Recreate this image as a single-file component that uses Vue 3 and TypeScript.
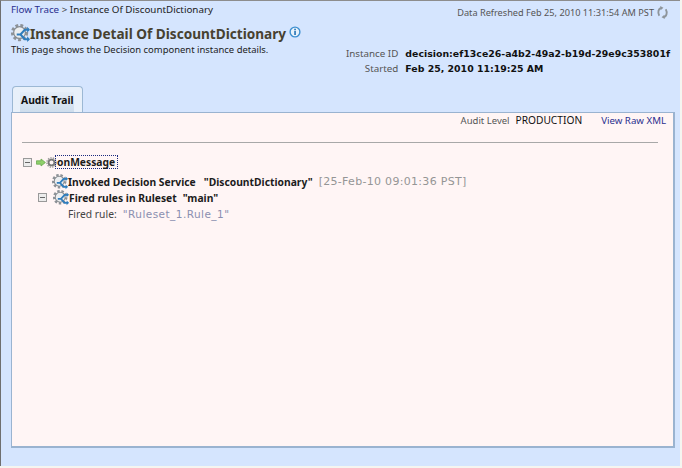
<script setup lang="ts">
const tree = { name: 'onMessage' }
</script>

<template>
  <div class="frame">
    <svg width="0" height="0" class="defs">
      <symbol id="gear" viewBox="0 0 20 20">
        <circle cx="9" cy="9" r="7.6" fill="none" stroke="#8d9297" stroke-width="3" stroke-dasharray="3 2.2" />
        <circle cx="9" cy="9" r="6.2" fill="#eceef0" stroke="#868b90" stroke-width="1.3" />
        <path d="M6 11 H10 L14.5 6 H19 M10 11 L14.5 16 H19" fill="none" stroke="#2f7dbd" stroke-width="2.2" />
        <path d="M17 3 L20 6 L17 9 Z M17 13 L20 16 L17 19 Z" fill="#2f7dbd" />
      </symbol>
    </svg>
    <header class="head">
      <div class="head-main">
        <div class="crumbs"><a class="link">Flow Trace</a> <span class="sep">&gt;</span> Instance Of DiscountDictionary</div>
        <h1 class="title">
          <svg class="title-gear" width="19" height="19"><use href="#gear" /></svg>
          <span>Instance Detail Of DiscountDictionary</span>
          <svg class="info" width="12" height="12" viewBox="0 0 12 12">
            <circle cx="6" cy="6" r="4.9" fill="#e8f2fb" stroke="#3d8fd0" stroke-width="1.4" />
            <rect x="5.2" y="2.7" width="1.7" height="1.6" fill="#2d78b8" />
            <rect x="5.2" y="5" width="1.7" height="4" fill="#2d78b8" />
          </svg>
        </h1>
        <p class="desc">This page shows the Decision component instance details.</p>
      </div>
      <div class="head-side">
        <div class="refresh">
          <span>Data Refreshed Feb 25, 2010 11:31:54 AM PST</span>
          <svg width="13" height="13" viewBox="0 0 14 14">
            <path d="M6 2 C2.5 2.5 1.5 7 3.5 10.5 M8 12 C11.5 11.5 12.5 7 10.5 3.5" fill="none" stroke="#8e959b" stroke-width="2" />
            <path d="M4.5 0 L8 2 L5 4.5 Z M9.5 14 L6 12 L9 9.5 Z" fill="#8e959b" />
          </svg>
        </div>
        <dl class="meta">
          <dt>Instance ID</dt>
          <dd>decision:ef13ce26-a4b2-49a2-b19d-29e9c353801f</dd>
          <dt>Started</dt>
          <dd>Feb 25, 2010 11:19:25 AM</dd>
        </dl>
      </div>
    </header>

    <div class="tabs">
      <div class="tab"><span class="tab-label">Audit Trail</span></div>
    </div>

    <section class="panel">
      <div class="toolbar">
        <span class="muted">Audit Level</span>
        <span class="level">PRODUCTION</span>
        <a class="link raw">View Raw XML</a>
      </div>
      <hr class="rule" />
      <div class="tree">
        <div class="row root">
          <span class="toggle"></span>
          <svg class="arrow" width="10" height="9" viewBox="0 0 12 10">
            <path d="M0.5 3 H6 V0.8 L11.3 5 L6 9.2 V7 H0.5 Z" fill="#8fd06a" stroke="#6aa850" />
          </svg>
          <svg class="plain-gear" width="11" height="11" viewBox="0 0 12 12">
            <circle cx="6" cy="6" r="3.2" fill="none" stroke="#777" stroke-width="2" />
            <circle cx="6" cy="6" r="5" fill="none" stroke="#999" stroke-width="1.6" stroke-dasharray="1.6 1.1" />
          </svg>
          <strong class="focus">{{ tree.name }}</strong>
        </div>
        <div class="row invoked">
          <svg class="node-gear" width="16" height="16"><use href="#gear" /></svg>
          <strong>Invoked Decision Service</strong>
          <strong class="quoted">"DiscountDictionary"</strong>
          <span class="stamp">[25-Feb-10 09:01:36 PST]</span>
        </div>
        <div class="row fired">
          <span class="toggle"></span>
          <svg class="node-gear" width="16" height="16"><use href="#gear" /></svg>
          <strong>Fired rules in Ruleset</strong>
          <strong class="main">"main"</strong>
        </div>
        <div class="row rule-row">
          <span>Fired rule:</span>
          <span class="rule-name">"Ruleset_1.Rule_1"</span>
        </div>
      </div>
    </section>
  </div>
</template>

<style>
html, body { margin: 0; background: #f5f5f0; }
</style>

<style scoped>
.frame {
  box-sizing: border-box;
  width: 680px;
  height: 466px;
  padding: 0 5px 0 10px;
  display: flex;
  flex-direction: column;
  background: #d5e5fe;
  border-top: 1px solid #8d8d8d;
  border-left: 1px solid #6f6f6f;
  font-family: "Noto Sans", sans-serif;
  font-size: 10.3px;
  color: #1c1c1c;
}
.defs { position: absolute; }
.head { display: flex; justify-content: space-between; height: 87px; }
.head-main { padding-top: 3px; }
.crumbs { line-height: 12px; font-size: 9.8px; }
.link { color: #2a2f8f; }
.sep { color: #444; }
.title {
  display: flex;
  align-items: center;
  margin: 8px 0 0;
  height: 19px;
  font-size: 13.6px;
  line-height: 16px;
  font-weight: bold;
  color: #474130;
  white-space: nowrap;
}
.title-gear { margin-right: 0; }
.info { margin-left: 3px; margin-top: -3px; }
.desc { margin: 1px 0 0; font-size: 9.45px; line-height: 11px; white-space: nowrap; }
.head-side { display: flex; flex-direction: column; align-items: flex-end; padding-top: 4px; }
.refresh { display: flex; align-items: center; gap: 2px; height: 14px; color: #555; font-size: 9.2px; padding-right: 6px; }
.meta {
  margin: 28px 5px 0 0;
  display: grid;
  grid-template-columns: auto auto;
  column-gap: 7px;
  row-gap: 2px;
  line-height: 13px;
}
.meta dt { text-align: right; color: #555; font-size: 9.8px; }
.meta dd { margin: 0; font-family: "DejaVu Sans", sans-serif; font-size: 9.4px; font-weight: bold; color: #111; }
.tabs { display: flex; height: 24px; padding-left: 1px; }
.tab {
  box-sizing: border-box;
  width: 71px;
  height: 26px;
  margin-top: -2px;
  position: relative;
  z-index: 1;
  padding: 5px 8px 0;
  background: #e8f0fa;
  border: 1px solid #9cb8d4;
  border-bottom: none;
  border-radius: 4px 4px 0 0;
}
.tab-label {
  display: block;
  height: 20px;
  line-height: 16px;
  font-weight: bold;
  color: #111;
  background: linear-gradient(#e4edf8, #cedded);
  margin: 0 0 0 -1px;
  padding-left: 1px;
  white-space: nowrap;
}
.panel {
  box-sizing: border-box;
  flex: none;
  width: 664px;
  height: 336px;
  background: #fff5f5;
  border: 1px solid #9ab3d0;
  border-bottom-width: 2px;
  border-right-width: 2px;
  padding: 0 6px 0 10px;
}
.toolbar {
  display: flex;
  justify-content: flex-end;
  align-items: center;
  height: 14px;
  padding: 0 1px 0 0;
}
.muted { color: #555; font-size: 9.5px; }
.level { margin-left: 6px; color: #111; font-size: 10.2px; }
.raw { margin-left: 19px; font-size: 9.7px; }
.rule { margin: 15px 9px 0 0; border: 0; border-top: 1px solid #a8a8a8; }
.tree { padding-top: 12px; }
.row { display: flex; align-items: center; height: 18px; white-space: pre; }
.toggle {
  box-sizing: border-box;
  width: 9px;
  height: 9px;
  margin-left: 1px;
  border: 1px solid #999;
  background: #ececec linear-gradient(#666, #666) center / 5px 1px no-repeat;
}
.root { height: 14px; }
.arrow { margin-left: 4px; }
.focus { border: 1px dotted #1a2a80; padding: 0 2px 0 1px; height: 12px; line-height: 12px; margin-left: -2px; }
.invoked { padding-left: 30px; margin-top: 4px; height: 17px; }
.node-gear { margin-right: 0; }
.quoted { margin-left: 8px; }
.stamp { margin-left: 6px; font-family: "DejaVu Sans", sans-serif; font-size: 11px; letter-spacing: 0.3px; color: #959595; }
.fired { padding-left: 15px; height: 15px; }
.fired .toggle { margin-right: 6px; }
.main { margin-left: 6px; }
.rule-row { padding-left: 46px; height: 17px; color: #444; }
.rule-name { margin-left: 6px; font-family: "DejaVu Sans", sans-serif; font-size: 10.5px; letter-spacing: 0.45px; color: #8b8fb0; }
</style>
